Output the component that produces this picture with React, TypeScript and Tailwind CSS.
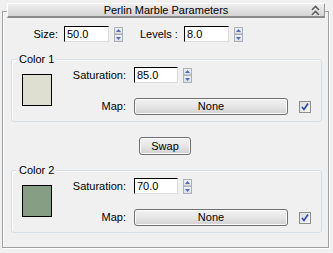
import React from "react";

function Spinner() {
  return (
    <svg width="9" height="15" viewBox="0 0 9 15" className="block">
      <defs>
        <linearGradient id="spg" x1="0" y1="0" x2="0" y2="1">
          <stop offset="0" stopColor="#f2f3f5" />
          <stop offset="1" stopColor="#d9dce2" />
        </linearGradient>
      </defs>
      <rect x="0.5" y="0.5" width="8" height="6.5" fill="url(#spg)" stroke="#aab1bc" />
      <rect x="0.5" y="7.5" width="8" height="7" fill="url(#spg)" stroke="#aab1bc" />
      <path d="M4.5 2 L7 5 L2 5 Z" fill="#4d6dbd" />
      <path d="M4.5 13 L7 10 L2 10 Z" fill="#4d6dbd" />
    </svg>
  );
}

function NumField({ value, width }: { value: string; width: string }) {
  return (
    <div
      className={`${width} h-[16px] bg-white border border-t-black border-l-black border-r-[#dcdcdc] border-b-[#dcdcdc] pl-[2px] leading-[14px]`}
    >
      {value}
    </div>
  );
}

function Check() {
  return (
    <div className="w-[12px] h-[12px] border border-[#8e8f8f] bg-gradient-to-br from-[#dcdcdc] to-[#f6f6f6] flex items-center justify-center">
      <svg width="8" height="8" viewBox="0 0 8 8">
        <path d="M1 4 L3 6.5 L7 0.5" fill="none" stroke="#2a45a6" strokeWidth="1.6" />
      </svg>
    </div>
  );
}

function ColorGroup({ title, swatch, sat }: { title: string; swatch: string; sat: string }) {
  return (
    <div className="relative ml-[8px] w-[311px] h-[63px] border border-[#d5dfe5] rounded-[3px] shadow-[inset_1px_1px_0_#ffffff]">
      <div className="absolute left-[5px] -top-[7px] px-[2px] bg-[#f0f0f0] leading-[13px]">{title}</div>
      <div className="flex pt-[7px]">
        <div className={`ml-[10px] mt-[7px] w-[30px] h-[32px] border border-black ${swatch}`} />
        <div className="flex flex-col">
          <div className="flex items-center h-[16px]">
            <div className="w-[74px] text-right">Saturation:</div>
            <div className="ml-[8px]">
              <NumField value={sat} width="w-[44px]" />
            </div>
            <div className="ml-[5px]">
              <Spinner />
            </div>
          </div>
          <div className="flex items-center h-[17px] mt-[15px]">
            <div className="w-[74px] text-right">Map:</div>
            <div className="ml-[8px] w-[154px] h-[17px] rounded-[3px] border border-[#707070] bg-gradient-to-b from-[#f2f2f2] via-[#e6e6e6] to-[#d0d0d0] shadow-[inset_0_0_0_1px_#fbfbfb] flex items-center justify-center leading-[13px]">
              None
            </div>
            <div className="ml-[11px]">
              <Check />
            </div>
          </div>
        </div>
      </div>
    </div>
  );
}

export default function App() {
  return (
    <div className="w-[333px] h-[253px] bg-[#f0f0f0] pt-[3px] text-[11px] text-black font-['Liberation_Sans',Arial,sans-serif] overflow-hidden">
      {/* Rollout title */}
      <div className="relative z-10 ml-[7px] w-[318px] h-[15px] border-t border-l border-white border-r border-r-[#9a9a9a] border-b-2 border-b-[#8a8a8a] bg-gradient-to-b from-[#eeeeee] to-[#d4d4d4] flex items-center justify-center leading-[12px]">
        <span>Perlin Marble Parameters</span>
        <svg width="9" height="11" viewBox="0 0 9 11" className="absolute right-[4px] top-[1px]">
          <path d="M1 5 L4.5 1.5 L8 5" fill="none" stroke="#ffffff" strokeWidth="1.6" transform="translate(0.6 0.8)" />
          <path d="M1 10 L4.5 6.5 L8 10" fill="none" stroke="#ffffff" strokeWidth="1.6" transform="translate(0.6 0.8)" />
          <path d="M1 5 L4.5 1.5 L8 5" fill="none" stroke="#5a5a5a" strokeWidth="1.6" />
          <path d="M1 10 L4.5 6.5 L8 10" fill="none" stroke="#5a5a5a" strokeWidth="1.6" />
        </svg>
      </div>

      {/* Rollout frame */}
      <div className="-mt-[7px] ml-[2px] w-[327px] h-[237px] border border-[#a0a0a0] shadow-[1px_1px_0_#ffffff,inset_1px_1px_0_#ffffff]">
        <div className="flex items-center h-[16px] mt-[14px]">
          <div className="w-[55px] text-right">Size:</div>
          <div className="ml-[6px]">
            <NumField value="50.0" width="w-[45px]" />
          </div>
          <div className="ml-[5px]">
            <Spinner />
          </div>
          <div className="ml-[17px] w-[44px] whitespace-nowrap">Levels :</div>
          <div>
            <NumField value="8.0" width="w-[45px]" />
          </div>
          <div className="ml-[5px]">
            <Spinner />
          </div>
        </div>

        <div className="mt-[17px]">
          <ColorGroup title="Color 1" swatch="bg-[#dfdfd1]" sat="85.0" />
        </div>

        <div className="mt-[15px] ml-[136px] w-[52px] h-[18px] rounded-[3px] border border-[#707070] bg-gradient-to-b from-[#f2f2f2] via-[#e6e6e6] to-[#d0d0d0] shadow-[inset_0_0_0_1px_#fbfbfb] flex items-center justify-center leading-[13px]">
          Swap
        </div>

        <div className="mt-[15px]">
          <ColorGroup title="Color 2" swatch="bg-[#869f84]" sat="70.0" />
        </div>
      </div>
    </div>
  );
}
